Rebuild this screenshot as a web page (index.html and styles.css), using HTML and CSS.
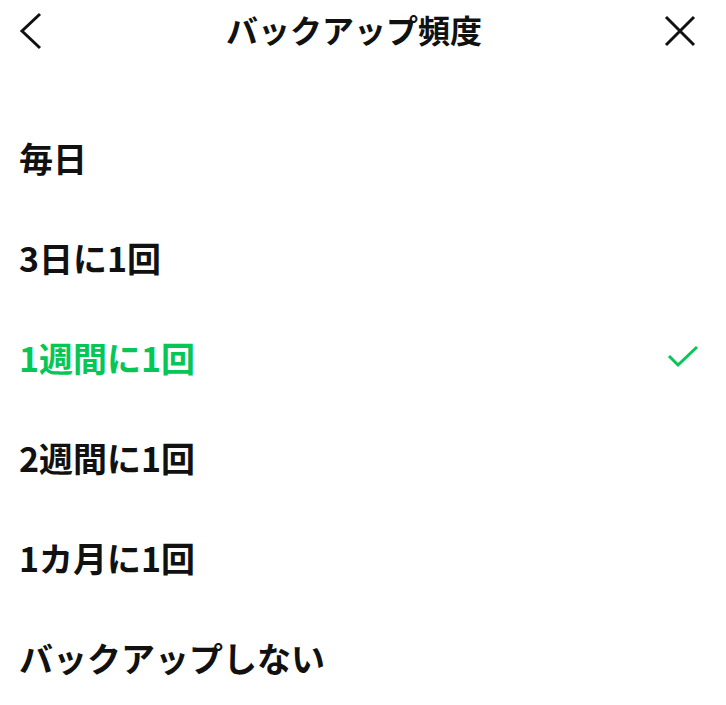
FILE: index.html
```html
<!DOCTYPE html>
<html lang="ja">
<head>
<meta charset="utf-8">
<link rel="stylesheet" href="styles.css">
</head>
<body>
<header class="header">
  <button class="icon-btn" aria-label="戻る">
    <svg width="26" height="38" viewBox="0 0 26 38"><path d="M22 2 L4 19 L22 36" fill="none" stroke="#111" stroke-width="3"/></svg>
  </button>
  <h1 class="title">バックアップ頻度</h1>
  <button class="icon-btn" aria-label="閉じる">
    <svg width="32" height="32" viewBox="0 0 32 32"><path d="M2 2 L30 30 M30 2 L2 30" fill="none" stroke="#111" stroke-width="3"/></svg>
  </button>
</header>
<ul class="list">
  <li class="item">毎日</li>
  <li class="item">3日に1回</li>
  <li class="item selected">1週間に1回
    <svg class="check" width="32" height="24" viewBox="0 0 32 24"><path d="M2 11 L11 20 L30 2" fill="none" stroke="#06c755" stroke-width="3"/></svg>
  </li>
  <li class="item">2週間に1回</li>
  <li class="item">1カ月に1回</li>
  <li class="item">バックアップしない</li>
</ul>
</body>
</html>
```
FILE: styles.css
```css
html, body {
  margin: 0;
  padding: 0;
  background: #fff;
}
body {
  font-family: "Noto Sans CJK JP", "Noto Sans", sans-serif;
  color: #111;
}
.header {
  height: 62px;
  display: flex;
  align-items: center;
  justify-content: space-between;
  padding: 0 30px 0 18px;
}
.icon-btn {
  background: none;
  border: 0;
  padding: 0;
  display: flex;
  align-items: center;
}
.title {
  margin: 0;
  padding-bottom: 4px;
  font-size: 32px;
  font-weight: 700;
  line-height: 1;
}
.list {
  list-style: none;
  margin: 45px 0 0;
  padding: 0;
}
.item {
  height: 100px;
  display: flex;
  align-items: center;
  justify-content: space-between;
  padding: 0 27px 0 19px;
  font-size: 34px;
  font-weight: 700;
}
.item.selected {
  color: #06c755;
}
```
